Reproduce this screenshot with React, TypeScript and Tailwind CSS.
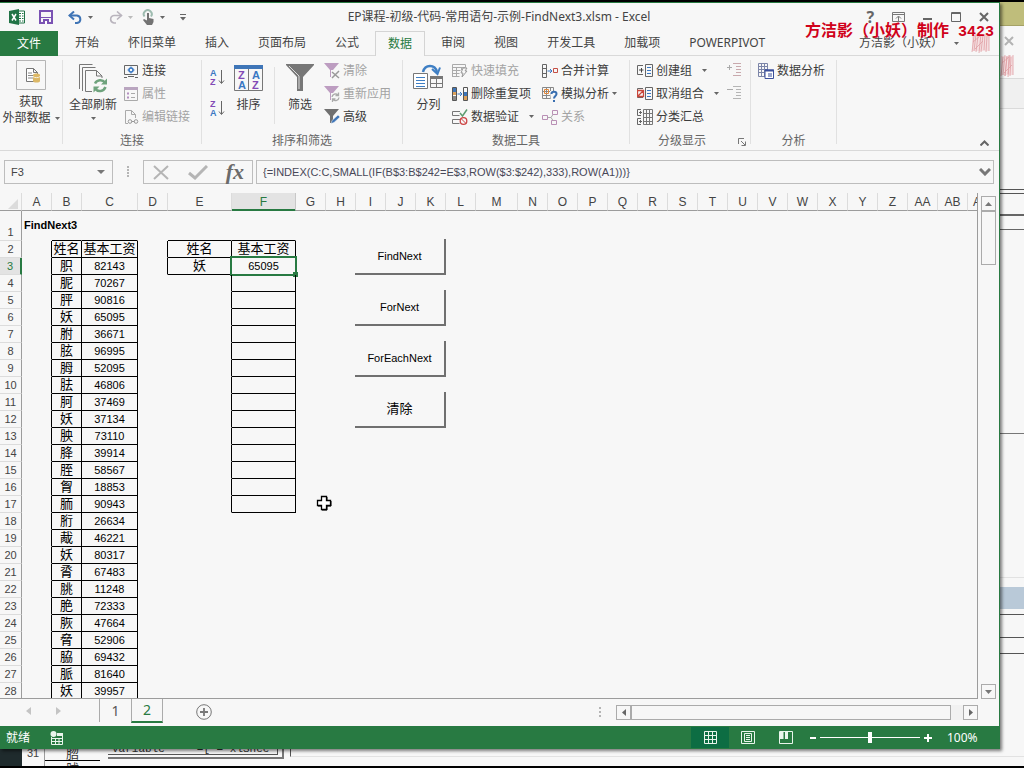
import type { ReactNode } from "react";

const UI = "font-['Noto_Sans','Noto_Sans_CJK_SC',sans-serif]";
const SHEET = "font-['Liberation_Sans','Noto_Sans_CJK_SC',sans-serif]";

const menuTabs = [
  "开始",
  "怀旧菜单",
  "插入",
  "页面布局",
  "公式",
  "数据",
  "审阅",
  "视图",
  "开发工具",
  "加载项",
  "POWERPIVOT",
];

const columns = [
  { name: "A", width: "w-[30px]" },
  { name: "B", width: "w-[30px]" },
  { name: "C", width: "w-[56px]" },
  { name: "D", width: "w-[30px]" },
  { name: "E", width: "w-[64px]" },
  { name: "F", width: "w-[64px]" },
  { name: "G", width: "w-[30px]" },
  { name: "H", width: "w-[30px]" },
  { name: "I", width: "w-[30px]" },
  { name: "J", width: "w-[30px]" },
  { name: "K", width: "w-[30px]" },
  { name: "L", width: "w-[30px]" },
  { name: "M", width: "w-[42px]" },
  { name: "N", width: "w-[30px]" },
  { name: "O", width: "w-[30px]" },
  { name: "P", width: "w-[30px]" },
  { name: "Q", width: "w-[30px]" },
  { name: "R", width: "w-[30px]" },
  { name: "S", width: "w-[30px]" },
  { name: "T", width: "w-[30px]" },
  { name: "U", width: "w-[30px]" },
  { name: "V", width: "w-[30px]" },
  { name: "W", width: "w-[30px]" },
  { name: "X", width: "w-[30px]" },
  { name: "Y", width: "w-[30px]" },
  { name: "Z", width: "w-[30px]" },
  { name: "AA", width: "w-[30px]" },
  { name: "AB", width: "w-[30px]" },
  { name: "AC", width: "" },
];

const people: [string, string][] = [
  ["姓名", "基本工资"],
  ["胑", "82143"],
  ["胒", "70267"],
  ["胓", "90816"],
  ["妖", "65095"],
  ["胕", "36671"],
  ["胘", "96995"],
  ["胟", "52095"],
  ["胠", "46806"],
  ["胢", "37469"],
  ["妖", "37134"],
  ["胦", "73110"],
  ["胮", "39914"],
  ["胵", "58567"],
  ["胷", "18853"],
  ["胹", "90943"],
  ["胻", "26634"],
  ["胾", "46221"],
  ["妖", "80317"],
  ["脀", "67483"],
  ["脁", "11248"],
  ["脃", "72333"],
  ["脄", "47664"],
  ["脅", "52906"],
  ["脇", "69432"],
  ["脈", "81640"],
  ["妖", "39957"],
];

const macros = ["FindNext", "ForNext", "ForEachNext", "清除"];

function Svg({ w = 16, h = 16, children }: { w?: number; h?: number; children: ReactNode }) {
  return (
    <svg width={w} height={h} viewBox={`0 0 ${w} ${h}`} fill="none" className="shrink-0" aria-hidden="true">
      {children}
    </svg>
  );
}

function Caret({ faded = false }: { faded?: boolean }) {
  return (
    <Svg w={5} h={3}>
      <path d="M0 0h5L2.5 3z" fill={faded ? "#bbb" : "#666"} />
    </Svg>
  );
}

/* ---------- ribbon icons ---------- */

const ExcelLogo = () => (
  <Svg>
    <path d="M9 2h6.5v12H9" fill="#fff" stroke="#217346" />
    <path d="M10 4.5h2M13 4.5h1.500M10 7h2M13 7h1.500M10 9.500h2M13 9.500h1.500M10 12h2M13 12h1.500" stroke="#217346" />
    <path d="M0 2l10-2v16L0 14z" fill="#217346" />
    <path d="M3 5l4 6.500M7 5l-4 6.500" stroke="#fff" strokeWidth="1.500" />
  </Svg>
);

const SaveIcon = () => (
  <Svg w={14} h={14}>
    <path d="M1 1h12v12H1z" stroke="#7a52b3" strokeWidth="2" />
    <path d="M2 7.500h10" stroke="#7a52b3" />
    <path d="M4 9h6v5H4z" fill="#7a52b3" />
    <path d="M6 11h2v3H6z" fill="#fff" />
  </Svg>
);

const UndoIcon = () => (
  <Svg w={15} h={13}>
    <path d="M1.500 4.500h7.500a4 3.800 0 0 1 0 7.500H7" stroke="#3f74b5" strokeWidth="2" />
    <path d="M6 .5l-4.500 4L6 8.500" stroke="#3f74b5" strokeWidth="2" />
  </Svg>
);

const RedoIcon = () => (
  <Svg w={15} h={13}>
    <path d="M13.500 4.500H6A4 3.800 0 0 0 6 12h2" stroke="#b9b4bd" strokeWidth="1.600" />
    <path d="M9 .5l4.500 4L9 8.500" stroke="#b9b4bd" strokeWidth="1.600" />
  </Svg>
);

const TouchIcon = () => (
  <Svg w={14} h={17}>
    <path d="M2.500 7.500a4 4 0 1 1 6.500 0" stroke="#9ebcb0" strokeWidth="2" />
    <path d="M5 4h2v5l4.500 1v3L10 16H5l-4-5 1-1 3 1.500z" fill="#737373" />
  </Svg>
);

const ExternalDataIcon = () => (
  <Svg w={30} h={30}>
    <path d="M.5.5h29v29H.5z" stroke="#b5b5b5" />
    <path d="M10.500 8.500h7l4 4v9h-11zM17.500 8.500v4h4" fill="#fff" stroke="#777" />
    <path d="M12 13h4M12 15.500h5M12 18h5" stroke="#888" />
    <path d="M17 15c0-2 7-2 7 0v6c0 2-7 2-7 0z" fill="#dcb867" />
    <path d="M17 16.500c1 1.500 6 1.500 7 0" stroke="#f7f0dc" />
  </Svg>
);

const RefreshAllIcon = () => (
  <Svg w={30} h={30}>
    <path d="M1.500 26V1.500h13M4.500 28V4.500h13" stroke="#777" />
    <path d="M14 28.500H7.500v-21h11l5.500 5.500v2M18.500 7.500V13H24" stroke="#777" />
    <path d="M17 20.500a6 6 0 0 1 10-1M27.500 24a6 6 0 0 1-10.500 1.500" stroke="#6fa37d" strokeWidth="2.500" />
    <path d="M29 15.500v6h-6zM15.500 29.500v-6h6z" fill="#6fa37d" />
  </Svg>
);

const ConnectionsIcon = () => (
  <Svg>
    <path d="M1.500 2.500h13v9h-13zM1 14.500h3M5 13.500h6M12 14.500h3" stroke="#666" />
    <circle cx="8" cy="7" r="2" stroke="#3a78c3" strokeWidth="1.500" />
    <path d="M8 3.500v2M8 8.500v2M4.500 7h2M9.500 7h2" stroke="#3a78c3" />
  </Svg>
);

const PropertiesIcon = () => (
  <Svg>
    <path d="M1.500 1.500h13v13h-13z" stroke="#aaa" />
    <path d="M1 1h14v3H1z" fill="#b9a5bf" />
    <path d="M4 7.500h2M4 11.500h2" stroke="#b48fc0" strokeWidth="2" />
    <path d="M8 7.500h4M8 11.500h4" stroke="#aaa" />
  </Svg>
);

const EditLinksIcon = () => (
  <Svg>
    <path d="M5 14.500H2.500v-13h6l4 4V9M8.500 1.500v4h4" stroke="#aaa" />
    <circle cx="7" cy="12.500" r="1.800" stroke="#999" />
    <circle cx="13" cy="12.500" r="1.800" stroke="#999" />
    <path d="M8.500 12.500h3" stroke="#999" />
  </Svg>
);

/* up/down letter pair drawn as text so it stays readable */
function SortLetters({ top, bottom }: { top: string; bottom: string }) {
  return (
    <Svg w={15} h={17}>
      <text x="0" y="7" fontSize="9" fontWeight="bold" fill={top === "A" ? "#3a78c3" : "#8249b5"} fontFamily="Liberation Sans">
        {top}
      </text>
      <text x="0" y="16" fontSize="9" fontWeight="bold" fill={bottom === "A" ? "#3a78c3" : "#8249b5"} fontFamily="Liberation Sans">
        {bottom}
      </text>
      <path d="M11.500 1v13M9 11.500l2.500 3 2.500-3" stroke="#666" />
    </Svg>
  );
}

const SortIcon = () => (
  <Svg w={29} h={26}>
    <path d="M.5.5h28v25H.5zM14.500 4v21" stroke="#777" />
    <path d="M0 0h29v4H0z" fill="#3f76b8" />
    <g fontSize="11" fontWeight="bold" fontFamily="Liberation Sans">
      <text x="4" y="14" fill="#8249b5">Z</text>
      <text x="4" y="24" fill="#3a78c3">A</text>
      <text x="18" y="14" fill="#3a78c3">A</text>
      <text x="18" y="24" fill="#8249b5">Z</text>
    </g>
  </Svg>
);

const FilterIcon = () => (
  <Svg w={28} h={28}>
    <path d="M0 0h28v1L17 13v14h-6V13L0 1z" fill="#777" />
    <path d="M3 2l10 10v13" stroke="#ddd" />
  </Svg>
);

function SmallFilter({ kind }: { kind: "clear" | "reapply" | "advanced" }) {
  return (
    <Svg>
      <path d="M0 0h15L9 7v7H6V7z" fill={kind === "advanced" ? "#707070" : "#bd9dc1"} />
      {kind !== "advanced" && <path d="M7 7h9v9H7z" fill="#f7f7f7" />}
      {kind === "clear" && <path d="M8 9l7 6M15 8l-7 7" stroke="#999" strokeWidth="1.500" />}
      {kind === "reapply" && (
        <path d="M8 11a3.500 3.500 0 0 1 6-2M15 11.500a3.500 3.500 0 0 1-6 2M14.500 6.500v3h-3M8.500 16v-3h3" stroke="#aaa" strokeWidth="1.300" />
      )}
      {kind === "advanced" && <path d="M7 14.500l1-3 6-5.500 2 2-6 5.500z" fill="#3f76b8" stroke="#f7f7f7" strokeWidth=".5" />}
    </Svg>
  );
}

const TextToColumnsIcon = () => (
  <Svg w={31} h={26}>
    <path d="M10 8c2-8 12-8 14 0" stroke="#3f7fc4" strokeWidth="2.500" />
    <path d="M19 5l5.500 5L27 3.500" stroke="#3f7fc4" strokeWidth="2" />
    <path d="M.5 9.500h14v15H.5z" fill="#fff" stroke="#777" />
    <path d="M3 13.500h9M3 16.500h9M3 19.500h9M3 22.500h9" stroke="#3f7fc4" />
    <path d="M17.500 12.500h12v11h-12zM23.500 15v9M17 19.500h13" stroke="#777" />
    <path d="M17 12h13v3H17z" fill="#777" />
  </Svg>
);

const FlashFillIcon = () => (
  <Svg>
    <path d="M.5 1.500h13v3H.5zM.5 7.500h8M.5 10.500h7M.5 13.500h7M.5 4v10M4.500 4v10M9.500 4v3" stroke="#aaa" />
    <path d="M11 5h4l-2 3h2l-5 6 1-4H9z" fill="#f7f7f7" stroke="#999" />
  </Svg>
);

const DuplicatesIcon = () => (
  <Svg>
    <path d="M.5 1.500h4v13h-4zM11.500 1.500h4v13h-4z" stroke="#555" />
    <path d="M1 2h3v4H1zM12 6h3v4h-3z" fill="#3f76b8" />
    <path d="M1 6h3v3H1zM12 10h3v4h-3z" fill="#dca25c" />
    <path d="M1 10h3v4H1z" fill="#8a8a8a" />
    <path d="M5.500 8h4M8 6l2 2-2 2" stroke="#3a78c3" />
  </Svg>
);

const ValidationIcon = () => (
  <Svg>
    <path d="M8 2.500H.5v4h7M8 10.500H.5v4h7" stroke="#777" />
    <path d="M8 4l2.500 3L15 .5" stroke="#5e9c70" strokeWidth="1.500" />
    <circle cx="11.500" cy="12" r="3.300" stroke="#cc4444" strokeWidth="1.300" />
    <path d="M9 9.500l5 5" stroke="#cc4444" />
  </Svg>
);

const ConsolidateIcon = () => (
  <Svg>
    <path d="M.5 1.500h4v13h-4zM.5 5.500h4M.5 10.500h4" stroke="#666" />
    <path d="M5.500 8h4M8 6l2 2-2 2" stroke="#3a78c3" />
    <path d="M11.500 5.500h4v4h-4z" stroke="#c44f45" />
  </Svg>
);

const WhatIfIcon = () => (
  <Svg>
    <path d="M.5 1.500h11v11H.5zM4.500 1v12M8.500 1v12M0 5.500h12M0 9.500h12" stroke="#888" />
    <path d="M2.500 3.500h4v4h-4z" stroke="#e0873b" />
    <path d="M8 5h8v11H9z" fill="#f7f7f7" />
    <path d="M9.500 8c0-3 5-3 5 0 0 2-2.500 2-2.500 4.500M12 14v2" stroke="#3a6fb0" strokeWidth="2" />
  </Svg>
);

const RelationIcon = () => (
  <Svg>
    <path d="M.5 6.500h5v4h-5zM10.500 1.500h5v4h-5zM9.500 11.500h5v4h-5z" stroke="#b98fb5" />
    <path d="M6 8.500h3M9 8.500l2-3M9 8.500l2 3" stroke="#aaa" />
  </Svg>
);

function OutlineIcon({ kind }: { kind: "group" | "ungroup" | "subtotal" }) {
  if (kind === "subtotal") {
    return (
      <Svg>
        <path d="M4 .5H.5v6H4M4 9.500H.5v6H4M2 3.500h3M3.500 2v3M2 12.500h3M3.500 11v3" stroke="#666" />
        <path d="M6.500.5h9v15h-9zM9.500 0v16M12.500 0v16M6 4.500h10M6 8.500h10M6 12.500h10" stroke="#777" />
      </Svg>
    );
  }
  return (
    <Svg>
      <path d="M6 2.500H.5v9H6M8.500 1.500h7v12h-7z" stroke="#666" />
      <path d="M10 4.500h4M10 7.500h4M10 10.500h4" stroke="#3a78c3" />
      {kind === "group" ? (
        <path d="M2 7h4.500M4.500 5v4.500" stroke="#444" />
      ) : (
        <path d="M.5 4.500h6v6h-6zM1 10l5-5" stroke="#c9473b" strokeWidth="1.300" />
      )}
    </Svg>
  );
}

function DetailIcon({ plus = false }: { plus?: boolean }) {
  return (
    <Svg w={15} h={14}>
      <path d="M6 .5h8M9 3.500h5M9 6.500h5M9 9.500h5M6 12.500h8" stroke={plus ? "#c9a9ad" : "#b5b5b5"} />
      <path d={plus ? "M0 4.500h5M2.500 2v5" : "M0 3.500h6"} stroke="#aaa" />
    </Svg>
  );
}

const AnalysisIcon = () => (
  <Svg>
    <path d="M.5.5h9v13h-9zM3.500 0v14M6.500 0v14M0 3.500h10M0 6.500h10M0 9.500h10" stroke="#7c85a8" />
    <path d="M7 7h8.500v8.500H7z" fill="#fff" stroke="#3b4f9c" />
    <path d="M7 6.500h9v2H7z" fill="#3b4f9c" />
    <path d="M10 11h4M10 13h4" stroke="#3b4f9c" />
  </Svg>
);

/* pinkish scribbled account picture */
const Scribble = ({ w, h }: { w: number; h: number }) => (
  <Svg w={w} h={h}>
    <path d={`M1 2h${w - 2}v${h - 4}H1z`} fill="#f5dfe1" />
    <path
      d={`M3 3L1 ${h - 1}M5 1L3 ${h - 2}M7 3L5 ${h - 1}M10 1L8 ${h}M${w - 7} 2l-2 ${h - 3}M${w - 5} 1l-1 ${h - 4}M${w - 3} 3l-1 ${h - 4}M${w - 1} 1v${h - 3}M2 9l7-6M4 ${h - 4}l8-8`}
      stroke="#df9fa5"
      strokeWidth=".8"
    />
  </Svg>
);

/* ---------- ribbon pieces ---------- */

type RowProps = { icon: ReactNode; label: string; caret?: boolean; spaced?: boolean; disabled?: boolean };

function RibbonRow({ icon, label, caret, spaced, disabled }: RowProps) {
  return (
    <button
      type="button"
      className={`flex h-[23px] items-center gap-[3px] whitespace-nowrap text-xs ${disabled ? "text-[#a3a3a3]" : "text-[#3c3c3c]"}`}
    >
      {icon}
      {label}
      {caret && (
        <span className={spaced ? "ml-[7px]" : ""}>
          <Caret />
        </span>
      )}
    </button>
  );
}

function Group({ label, className, children }: { label: string; className: string; children: ReactNode }) {
  return (
    <section className={`relative flex shrink-0 flex-col ${className}`}>
      <div className="flex flex-1 pt-[3px]">{children}</div>
      <h2 className="h-[18px] text-center text-xs leading-[18px] text-[#666]">{label}</h2>
    </section>
  );
}

const Divider = () => <div className="mt-1 mb-[6px] w-px shrink-0 bg-[#e1e1e1]" />;

function TitleBar() {
  return (
    <header className="flex h-7 items-center">
      <div className="flex flex-1 items-center pl-[9px]">
        <ExcelLogo />
        <button type="button" aria-label="保存" className="ml-[14px]">
          <SaveIcon />
        </button>
        <button type="button" aria-label="撤销" className="ml-[15px] flex items-center gap-[5px]">
          <UndoIcon />
          <Caret />
        </button>
        <button type="button" aria-label="恢复" className="ml-[15px] flex items-center gap-[5px]">
          <RedoIcon />
          <Caret faded />
        </button>
        <button type="button" aria-label="触摸模式" className="ml-[9px] flex items-center gap-1">
          <TouchIcon />
          <Caret />
        </button>
        <button type="button" aria-label="自定义快速访问工具栏" className="ml-[15px]">
          <Svg w={6} h={7}>
            <path d="M0 .5h6" stroke="#666" />
            <path d="M0 3h6L3 6.500z" fill="#666" />
          </Svg>
        </button>
      </div>
      <h1 className="text-xs text-[#444]">EP课程-初级-代码-常用语句-示例-FindNext3.xlsm - Excel</h1>
      <div className="flex flex-1 items-center justify-end gap-[18px] pr-[10px]">
        <button type="button" aria-label="帮助" className="text-base leading-4 font-bold text-[#666]">
          ?
        </button>
        <button type="button" aria-label="功能区显示选项">
          <Svg w={13} h={10}>
            <path d="M.5.5h12v9H.5zM0 2.500h13M6.500 9V4.500M4 6.500l2.500-2.500L9 6.500" stroke="#777" />
          </Svg>
        </button>
        <button type="button" aria-label="最小化">
          <Svg w={10} h={10}>
            <path d="M0 7h9" stroke="#666" strokeWidth="2" />
          </Svg>
        </button>
        <button type="button" aria-label="最大化">
          <Svg w={10} h={10}>
            <path d="M.5.5h9v9h-9zM0 1.500h10" stroke="#666" />
          </Svg>
        </button>
        <button type="button" aria-label="关闭">
          <Svg w={10} h={10}>
            <path d="M1 1l8 8M9 1L1 9" stroke="#666" strokeWidth="2" />
          </Svg>
        </button>
      </div>
    </header>
  );
}

function MenuBar() {
  return (
    <nav className="flex h-[25px] items-stretch text-xs text-[#444]">
      <button type="button" className="w-[58px] shrink-0 bg-[#287a42] text-white">
        文件
      </button>
      <div className="flex flex-1 border-b border-[#d9d9d9] pl-1">
        <div className="flex gap-[3px]">
          {menuTabs.map((tab) => (
            <button
              key={tab}
              type="button"
              className={
                tab === "数据"
                  ? "-mb-px border border-b-0 border-[#d4d4d4] bg-[#f7f7f7] px-3 whitespace-nowrap text-[#287a42]"
                  : "px-[13px] whitespace-nowrap"
              }
            >
              {tab}
            </button>
          ))}
        </div>
        <div className="ml-auto flex items-center pr-[9px]">
          <button type="button" className="flex items-center gap-[11px] whitespace-nowrap">
            方洁影（小妖）
            <Caret />
          </button>
          <span className="ml-3">
            <Scribble w={19} h={20} />
          </span>
        </div>
      </div>
    </nav>
  );
}

function Ribbon() {
  return (
    <div className="relative flex h-[95px] overflow-hidden border-b border-[#d9d9d9] text-xs text-[#3c3c3c]">
      <div className="flex w-[62px] shrink-0 justify-center pt-1">
        <button type="button" className="flex flex-col items-center leading-4">
          <ExternalDataIcon />
          <span className="mt-1">获取</span>
          <span className="flex items-center gap-1 whitespace-nowrap">
            外部数据
            <Caret />
          </span>
        </button>
      </div>
      <Divider />
      <Group label="连接" className="w-[138px]">
        <button type="button" className="ml-[6px] flex w-12 flex-col items-center pt-1 leading-4 whitespace-nowrap">
          <RefreshAllIcon />
          <span className="my-1">全部刷新</span>
          <Caret />
        </button>
        <div className="ml-[6px]">
          <RibbonRow icon={<ConnectionsIcon />} label="连接" />
          <RibbonRow icon={<PropertiesIcon />} label="属性" disabled />
          <RibbonRow icon={<EditLinksIcon />} label="编辑链接" disabled />
        </div>
      </Group>
      <Divider />
      <Group label="排序和筛选" className="w-[200px]">
        <div className="ml-2 flex flex-col gap-[14px] pt-[10px]">
          <button type="button" aria-label="升序">
            <SortLetters top="A" bottom="Z" />
          </button>
          <button type="button" aria-label="降序">
            <SortLetters top="Z" bottom="A" />
          </button>
        </div>
        <button type="button" className="ml-[9px] flex flex-col items-center justify-start gap-[6px] pt-[6px] leading-4">
          <SortIcon />
          排序
        </button>
        <div className="my-2 ml-[11px] w-px bg-[#e1e1e1]" />
        <button type="button" className="ml-[11px] flex flex-col items-center justify-start gap-[5px] pt-[5px] leading-4">
          <FilterIcon />
          筛选
        </button>
        <div className="ml-[10px]">
          <RibbonRow icon={<SmallFilter kind="clear" />} label="清除" disabled />
          <RibbonRow icon={<SmallFilter kind="reapply" />} label="重新应用" disabled />
          <RibbonRow icon={<SmallFilter kind="advanced" />} label="高级" />
        </div>
      </Group>
      <Divider />
      <Group label="数据工具" className="w-[226px]">
        <button type="button" className="ml-[10px] flex flex-col items-center justify-start gap-[7px] pt-[5px] leading-4">
          <TextToColumnsIcon />
          分列
        </button>
        <div className="ml-2">
          <RibbonRow icon={<FlashFillIcon />} label="快速填充" disabled />
          <RibbonRow icon={<DuplicatesIcon />} label="删除重复项" />
          <RibbonRow icon={<ValidationIcon />} label="数据验证" caret spaced />
        </div>
        <div className="ml-2">
          <RibbonRow icon={<ConsolidateIcon />} label="合并计算" />
          <RibbonRow icon={<WhatIfIcon />} label="模拟分析" caret />
          <RibbonRow icon={<RelationIcon />} label="关系" disabled />
        </div>
      </Group>
      <Divider />
      <Group label="分级显示" className="w-[120px] pr-4">
        <div className="ml-[7px]">
          <RibbonRow icon={<OutlineIcon kind="group" />} label="创建组" caret spaced />
          <RibbonRow icon={<OutlineIcon kind="ungroup" />} label="取消组合" caret spaced />
          <RibbonRow icon={<OutlineIcon kind="subtotal" />} label="分类汇总" />
        </div>
        <div className="ml-2 flex flex-col gap-[9px] pt-1">
          <button type="button" aria-label="显示明细数据">
            <DetailIcon plus />
          </button>
          <button type="button" aria-label="隐藏明细数据">
            <DetailIcon />
          </button>
        </div>
        <button type="button" aria-label="分级显示设置" className="absolute right-1 bottom-1">
          <Svg w={8} h={8}>
            <path d="M.5 6V.5H6M3 3l4 4M7.500 3.500v4h-4" stroke="#777" />
          </Svg>
        </button>
      </Group>
      <Divider />
      <Group label="分析" className="w-[85px]">
        <div className="ml-[7px]">
          <RibbonRow icon={<AnalysisIcon />} label="数据分析" />
        </div>
      </Group>
      <Divider />
      <button type="button" aria-label="折叠功能区" className="mt-auto mr-[10px] mb-1 ml-auto">
        <Svg w={9} h={6}>
          <path d="M.5 5.500l4-4 4 4" stroke="#666" strokeWidth="2" />
        </Svg>
      </button>
    </div>
  );
}

function FormulaBar() {
  return (
    <div className={`flex h-[42px] items-start pt-[9px] pr-[5px] pl-1 text-xs text-[#444] ${SHEET}`}>
      <div className="flex h-6 w-[109px] items-center border border-[#bdbdbd]">
        <input aria-label="名称框" defaultValue="F3" className="w-[90px] bg-transparent pl-[6px] text-[11px] outline-none" />
        <button type="button" aria-label="名称列表" className="ml-auto pr-[7px]">
          <Svg w={8} h={4}>
            <path d="M0 0h8L4 4z" fill="#777" />
          </Svg>
        </button>
      </div>
      <div className="flex h-6 w-[30px] items-center justify-center">
        <Svg w={2} h={12}>
          <path d="M1 0v2M1 3v2M1 6v2M1 9v2" stroke="#b5b5b5" strokeWidth="2" />
        </Svg>
      </div>
      <div className="flex h-6 w-[110px] items-center justify-between border border-[#bdbdbd] pr-2 pl-[9px]">
        <button type="button" aria-label="取消">
          <Svg w={17} h={15}>
            <path d="M1 1l14 13M15 1L1 14" stroke="#b5b5b5" strokeWidth="2" />
          </Svg>
        </button>
        <button type="button" aria-label="输入">
          <Svg w={20} h={15}>
            <path d="M1 8l6 5L19 1" stroke="#b5b5b5" strokeWidth="3" />
          </Svg>
        </button>
        <button type="button" className="font-['Liberation_Serif',serif] text-[22px] leading-5 font-bold text-[#6b6b6b] italic">
          fx
        </button>
      </div>
      <div className="ml-[3px] flex h-6 flex-1 items-center border border-[#bdbdbd]">
        <input
          aria-label="编辑栏"
          defaultValue="{=INDEX(C:C,SMALL(IF(B$3:B$242=E$3,ROW($3:$242),333),ROW(A1)))}"
          className="flex-1 bg-transparent pl-[6px] text-[11px] text-[#484858] outline-none"
        />
        <button type="button" aria-label="展开编辑栏" className="pr-[2px]">
          <Svg w={12} h={8}>
            <path d="M1 1l5 5 5-5" stroke="#777" strokeWidth="3" />
          </Svg>
        </button>
      </div>
    </div>
  );
}

function cellText(col: string, row: number) {
  if (row === 1) return col === "A" ? "FindNext3" : "";
  if (col === "B") return people[row - 2][0];
  if (col === "C") return people[row - 2][1];
  if (col === "E") return row === 2 ? "姓名" : row === 3 ? "妖" : "";
  if (col === "F") return row === 2 ? "基本工资" : row === 3 ? "65095" : "";
  return "";
}

const bordered = (col: string, row: number) =>
  row >= 2 && (col === "B" || col === "C" || (col === "E" && row <= 3) || (col === "F" && row <= 17));

function Cell({ index, row }: { index: number; row: number }) {
  const col = columns[index].name;
  const next = columns[index + 1]?.name ?? "";
  const text = cellText(col, row);
  const right = bordered(col, row) || bordered(next, row) ? "border-r-black" : "border-r-transparent";
  const bottom = bordered(col, row) || bordered(col, row + 1) ? "border-b-black" : "border-b-transparent";
  const size = /^[\d]+$/.test(text) ? "text-[11px]" : "text-[13px]";
  if (row === 1) {
    return (
      <td className={`border-r border-b p-0 pl-[2px] text-left text-[11px] font-bold whitespace-nowrap ${right} ${bottom}`}>
        {text}
      </td>
    );
  }
  return (
    <td className={`relative border-r border-b p-0 text-center leading-4 whitespace-nowrap ${right} ${bottom} ${size}`}>
      {text}
      {col === "F" && row === 3 && (
        <span className="absolute -inset-[2px] border-2 border-[#287a42]">
          <span className="absolute -right-[3px] -bottom-[3px] size-[5px] bg-[#287a42]" />
        </span>
      )}
    </td>
  );
}

function headerClass(name: string) {
  if (name === "F") {
    return "border-r border-b border-r-[#c8c8c8] border-b-[#287a42] bg-[#e3e3e3] p-0 font-normal text-[#287a42] shadow-[inset_0_-1px_0_#287a42]";
  }
  if (name === "AC") {
    return "overflow-hidden border-b border-b-[#9c9c9c] p-0 pl-[5px] text-left font-normal";
  }
  return "border-r border-b border-r-[#dcdcdc] border-b-[#9c9c9c] p-0 font-normal";
}

function Grid() {
  return (
    <div className="relative flex-1 overflow-hidden border-b border-[#9c9c9c]">
      <table className={`w-full table-fixed border-separate border-spacing-0 text-black ${SHEET}`}>
        <colgroup>
          <col className="w-[22px]" />
          {columns.map((c) => (
            <col key={c.name} className={c.width} />
          ))}
        </colgroup>
        <thead>
          <tr className="h-[18px] align-bottom text-xs leading-4 text-[#444]">
            <th className="border-r border-b border-r-[#dcdcdc] border-b-[#9c9c9c] p-0">
              <Svg w={18} h={14}>
                <path d="M18 3v10H8z" fill="#dcdcdc" />
              </Svg>
            </th>
            {columns.map((c) => (
              <th key={c.name} className={headerClass(c.name)}>
                {c.name}
              </th>
            ))}
          </tr>
        </thead>
        <tbody>
          {Array.from({ length: 28 }, (_, i) => i + 1).map((row) => (
            <tr key={row} className={row === 1 ? "h-[30px]" : "h-[17px]"}>
              <th
                className={
                  row === 3
                    ? "border-r-2 border-b border-r-[#287a42] border-b-[#dcdcdc] bg-[#e3e3e3] p-0 text-[11px] leading-4 font-normal text-[#287a42]"
                    : "border-r border-b border-r-[#9c9c9c] border-b-[#dcdcdc] p-0 align-bottom text-[11px] leading-4 font-normal text-[#444]"
                }
              >
                {row}
              </th>
              {columns.map((c, i) => (
                <Cell key={c.name} index={i} row={row} />
              ))}
            </tr>
          ))}
        </tbody>
      </table>

      {/* form controls floating above the cells */}
      <div className={`absolute top-[46px] left-[355px] flex flex-col gap-[15px] ${SHEET}`}>
        {macros.map((m) => (
          <button
            key={m}
            type="button"
            className={`h-9 w-[91px] border-r-2 border-b-2 border-[#707070] text-black ${m === "清除" ? "text-[13px]" : "text-[11px]"}`}
          >
            {m}
          </button>
        ))}
      </div>
      <div className="absolute top-[301px] left-[316px]">
        <Svg w={17} h={17}>
          <path d="M6 3h5v4h4v5h-4v4H6v-4H2V7h4z" fill="#000" stroke="#000" />
          <path d="M5.500 2.500h5v4h4v5h-4v4h-5v-4h-4v-5h4z" fill="#fff" stroke="#000" strokeWidth="1.300" />
        </Svg>
      </div>
    </div>
  );
}

function VerticalScroll() {
  return (
    <div className="flex w-[15px] shrink-0 flex-col pt-[3px]">
      <button type="button" aria-label="向上滚动" className="flex h-[15px] items-center justify-center border border-[#ababab]">
        <Svg w={7} h={4}>
          <path d="M0 4h7L3.500 0z" fill="#777" />
        </Svg>
      </button>
      <div className="h-[54px] border border-[#ababab]" />
      <button type="button" aria-label="向下滚动" className="mt-auto flex h-[15px] items-center justify-center border border-[#ababab]">
        <Svg w={7} h={4}>
          <path d="M0 0h7L3.500 4z" fill="#777" />
        </Svg>
      </button>
    </div>
  );
}

function SheetTabs() {
  return (
    <div className="flex h-[27px] items-start text-sm text-[#555]">
      <div className="flex h-[23px] w-[100px] items-center gap-[25px] border-r border-[#ababab] pl-[26px]">
        <button type="button" aria-label="上一张工作表">
          <Svg w={5} h={8}>
            <path d="M5 0v8L0 4z" fill="#c4c4c4" />
          </Svg>
        </button>
        <button type="button" aria-label="下一张工作表">
          <Svg w={5} h={8}>
            <path d="M0 0v8l5-4z" fill="#c4c4c4" />
          </Svg>
        </button>
      </div>
      <button type="button" className="h-[23px] w-[31px] leading-[23px]">
        1
      </button>
      <button type="button" className="-mt-px h-[25px] w-8 border-x border-b-2 border-x-[#ababab] border-b-[#287a42] bg-[#f7f7f7] leading-[23px] text-[#287a42]">
        2
      </button>
      <button type="button" aria-label="新工作表" className="mt-[5px] ml-[33px]">
        <Svg w={16} h={16}>
          <circle cx="8" cy="8" r="7.300" stroke="#777" />
          <path d="M4 8h8M8 4v8" stroke="#777" strokeWidth="1.800" />
        </Svg>
      </button>
      <div className="ml-auto flex pt-[6px] pr-[21px]">
        <Svg w={2} h={15}>
          <path d="M1 2v2M1 6v2M1 10v2" stroke="#b5b5b5" strokeWidth="2" />
        </Svg>
        <button type="button" aria-label="向左滚动" className="ml-[15px] flex size-[15px] items-center justify-center border border-[#ababab]">
          <Svg w={4} h={7}>
            <path d="M4 0v7L0 3.500z" fill="#666" />
          </Svg>
        </button>
        <div className="h-[15px] w-[320px] border border-[#ababab]" />
        <div className="w-3 bg-[#f1f1f1]" />
        <button type="button" aria-label="向右滚动" className="flex size-[15px] items-center justify-center border border-[#ababab]">
          <Svg w={4} h={7}>
            <path d="M0 0v7l4-3.500z" fill="#666" />
          </Svg>
        </button>
      </div>
    </div>
  );
}

function StatusBar() {
  return (
    <footer className="flex h-[23px] items-center bg-[#287a42] text-xs text-white">
      <span className="pl-[6px]">就绪</span>
      <button type="button" aria-label="录制宏" className="ml-5">
        <Svg w={14} h={14}>
          <path d="M1.500 6v7.500h11v-11H7M1.500 7.500h11M2 10.500h10M5.500 7v6M9 7v6" stroke="#e9f5ec" />
          <path d="M7 2h6v3H7z" fill="#e9f5ec" />
          <circle cx="3.500" cy="3" r="3" fill="#e9f5ec" />
        </Svg>
      </button>
      <div className="ml-auto flex h-full items-center pr-5">
        <button type="button" aria-label="普通" className="flex h-[21px] w-[38px] items-center justify-center bg-[#0d6d43]">
          <Svg w={13} h={13}>
            <path d="M.5.5h12v12H.5zM4.500 0v13M8.500 0v13M0 4.500h13M0 8.500h13" stroke="#e9f5ec" />
          </Svg>
        </button>
        <button type="button" aria-label="页面布局" className="flex w-[38px] justify-center">
          <Svg w={14} h={13}>
            <path d="M.5.5h13v12H.5zM3.500 2.500h7v8h-7zM5 4.500h4M5 6.500h4M5 8.500h4" stroke="#e9f5ec" />
          </Svg>
        </button>
        <button type="button" aria-label="分页预览" className="flex w-[38px] justify-center">
          <Svg w={14} h={13}>
            <path d="M.5.5h13v12H.5z" stroke="#e9f5ec" />
            <path d="M1 1h3.500v7H1zM6 1h3v7H6z" fill="#e9f5ec" />
          </Svg>
        </button>
        <button type="button" aria-label="缩小" className="ml-[5px]">
          <Svg w={6} h={8}>
            <path d="M0 4h6" stroke="#fff" strokeWidth="2" />
          </Svg>
        </button>
        <input
          type="range"
          aria-label="缩放"
          defaultValue={50}
          className="mx-1 h-[11px] w-[100px] appearance-none bg-transparent [&::-webkit-slider-runnable-track]:h-px [&::-webkit-slider-runnable-track]:bg-white [&::-webkit-slider-thumb]:-mt-[5px] [&::-webkit-slider-thumb]:h-[11px] [&::-webkit-slider-thumb]:w-1 [&::-webkit-slider-thumb]:appearance-none [&::-webkit-slider-thumb]:bg-white"
        />
        <button type="button" aria-label="放大">
          <Svg w={8} h={8}>
            <path d="M0 4h8M4 0v8" stroke="#fff" strokeWidth="2" />
          </Svg>
        </button>
        <span className="ml-[15px] w-8">100%</span>
      </div>
    </footer>
  );
}

/* the slice of other windows that shows to the right of the workbook */
function BackgroundRight() {
  return (
    <aside className="flex w-6 shrink-0 flex-col bg-[#f7f7f7]">
      <div className="h-6 border-b border-[#a5a266] bg-[#bfbd7b]" />
      <div className="flex h-[53px] flex-col items-start gap-2 border-b border-[#dadada] pt-[10px]">
        <span className="ml-1">
          <Svg w={10} h={10}>
            <path d="M1 1l8 8M9 1L1 9" stroke="#b3b3b3" strokeWidth="2" />
          </Svg>
        </span>
        <Scribble w={14} h={23} />
      </div>
      <div className="h-[30px] border-b border-[#dadada] bg-[#f0f0f0]" />
      <div className="h-[81px] border-b border-[#555]" />
      <div className="h-1 border-b border-[#555]" />
      <div className="h-[22px] border-b-2 border-[#666]" />
      <div className="h-[14px] border-b border-[#666]" />
      <div className="h-[204px] border-b border-[#777]" />
      <div className="h-[144px] border-b border-[#e2e2e2]" />
      <div className="mt-[9px] h-[22px] bg-[#b9c9d8]" />
      <div className="h-[6px] border-b border-[#555]" />
      <div className="h-[23px] border-b border-[#555]" />
      <div className="h-4 border-b border-[#555]" />
    </aside>
  );
}

/* the slice of other windows that shows below the workbook */
function BackgroundBottom() {
  return (
    <div className={`flex h-[17px] shrink-0 overflow-hidden bg-[#f7f7f7] text-xs text-[#333] ${SHEET}`}>
      <div className="w-[22px] bg-[#1f2b2d]" />
      <div className="w-[23px] border-r border-[#9c9c9c] text-center text-[11px] leading-[9px] text-[#444]">31</div>
      <div className="w-[55px] text-center">
        <div className="h-3 border-b border-black text-[13px] leading-[9px]">脗</div>
        <div className="text-[13px] leading-4">脙</div>
      </div>
      <div className="ml-2 h-[10px] w-[176px] overflow-hidden border-r-2 border-b-2 border-[#777] pr-1 pb-[2px]">
        <div className="flex h-[6px] items-start gap-8 overflow-hidden border-r border-b border-[#555] pl-1 font-['Liberation_Mono',monospace] text-[11px] leading-[1px] whitespace-pre">
          <span>Variable</span>
          <span>=[ = xlShee</span>
        </div>
      </div>
      <div className="ml-[6px] h-2 flex-1 border-b border-l border-b-[#e2e2e2] border-l-[#555]" />
    </div>
  );
}

export default function App() {
  return (
    <div className={`flex h-screen flex-col overflow-hidden border-y-2 border-black bg-[#f0f0f0] ${UI}`}>
      <div className="flex min-h-0 flex-1">
        <main className="relative z-10 flex min-w-0 flex-1 flex-col border-t border-r border-[#287a42] bg-[#f7f7f7] shadow-[2px_2px_3px_rgba(0,0,0,0.5)]">
          <TitleBar />
          <MenuBar />
          <Ribbon />
          <FormulaBar />
          <div className="flex min-h-0 flex-1 gap-[3px] pr-[3px]">
            <div className="flex min-w-0 flex-1 flex-col border-r border-[#9c9c9c]">
              <Grid />
            </div>
            <VerticalScroll />
          </div>
          <SheetTabs />
          <StatusBar />
          <p className="absolute top-[14px] right-[5px] font-['Noto_Sans_CJK_SC',sans-serif] text-base leading-6 font-bold whitespace-nowrap text-[#d0021b]">
            方洁影（小妖）制作
            <span className="font-['Liberation_Mono',monospace] text-[15px]"> 3423</span>
          </p>
        </main>
        <BackgroundRight />
      </div>
      <BackgroundBottom />
    </div>
  );
}
